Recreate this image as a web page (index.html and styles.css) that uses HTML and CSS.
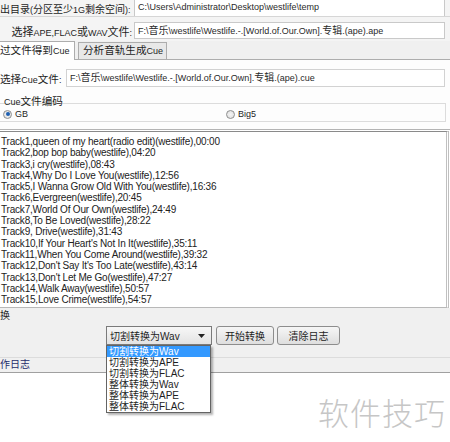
FILE: index.html
```html
<!DOCTYPE html>
<html>
<head>
<meta charset="utf-8">
<link rel="stylesheet" href="styles.css">
</head>
<body>
<div class="win">
  <div class="row r1">
    <span class="lbl l1"><i class="f">出目录</i>(<i class="f">分区至少</i>1G<i class="f">剩余空间</i>):</span>
    <div class="field f1">C:\Users\Administrator\Desktop\westlife\temp</div>
  </div>
  <div class="row r2">
    <span class="lbl l2"><i class="c2">选择</i>APE,FLAC<i class="c2">或</i>WAV<i class="c2">文件</i>:</span>
    <div class="field f2">F:\<i class="f">音乐</i>\westlife\Westlife.-.[World.of.Our.Own].<i class="f">专辑</i>.(ape).ape</div>
  </div>
  <div class="tabs">
    <div class="tab active"><i class="c">过文件得到</i>Cue</div>
    <div class="tab"><i class="c">分析音轨生成</i>Cue</div>
  </div>
  <div class="page">
    <div class="row r3">
      <span class="lbl l3"><i class="c">选择</i>Cue<i class="c">文件</i>:</span>
      <div class="field f3">F:\<i class="f">音乐</i>\westlife\Westlife.-.[World.of.Our.Own].<i class="f">专辑</i>.(ape).cue</div>
    </div>
    <div class="group">
      <div class="glabel">Cue<i class="c">文件编码</i></div>
      <div class="gbox">
        <label class="radio"><span class="dot on"></span>GB</label>
        <label class="radio big5"><span class="dot"></span>Big5</label>
      </div>
    </div>
  </div>
  <div class="log">
    <div>Track1,queen of my heart(radio edit)(westlife),00:00</div>
    <div>Track2,bop bop baby(westlife),04:20</div>
    <div>Track3,i cry(westlife),08:43</div>
    <div>Track4,Why Do I Love You(westlife),12:56</div>
    <div>Track5,I Wanna Grow Old With You(westlife),16:36</div>
    <div>Track6,Evergreen(westlife),20:45</div>
    <div>Track7,World Of Our Own(westlife),24:49</div>
    <div>Track8,To Be Loved(westlife),28:22</div>
    <div>Track9, Drive(westlife),31:43</div>
    <div>Track10,If Your Heart's Not In It(westlife),35:11</div>
    <div>Track11,When You Come Around(westlife),39:32</div>
    <div>Track12,Don't Say It's Too Late(westlife),43:14</div>
    <div>Track13,Don't Let Me Go(westlife),47:27</div>
    <div>Track14,Walk Away(westlife),50:57</div>
    <div>Track15,Love Crime(westlife),54:57</div>
  </div>
  <div class="convert">
    <div class="clabel">换</div>
    <div class="controls">
      <div class="select">
        <span>切割转换为Wav</span>
        <svg class="arrow" width="7" height="4" viewBox="0 0 7 4"><path d="M0 0H7L3.5 4Z" fill="#222"/></svg>
      </div>
      <div class="btn b1">开始转换</div>
      <div class="btn b2">清除日志</div>
    </div>
  </div>
  <div class="oplog"><span>作日志</span></div>
  <div class="bottom"></div>

  <ul class="droplist">
    <li class="sel">切割转换为Wav</li>
    <li>切割转换为APE</li>
    <li>切割转换为FLAC</li>
    <li>整体转换为Wav</li>
    <li>整体转换为APE</li>
    <li>整体转换为FLAC</li>
  </ul>
  <div class="watermark">软件技巧</div>
</div>
</body>
</html>
```
FILE: styles.css
```css
* { box-sizing: border-box; }
html, body { margin: 0; padding: 0; background: #fff; }
body {
  font-family: "Liberation Sans", "Noto Sans CJK SC", sans-serif;
  font-size: 9px;
  color: #1e1e1e;
}
i { font-style: normal; }
.c { font-size: 10.6px; }
.c2 { font-size: 11px; }
.f { font-size: 10px; }
.win {
  position: relative;
  width: 450px;
  height: 442px;
  overflow: hidden;
  background: #fff;
}
.row { display: flex; align-items: center; }
.lbl { white-space: nowrap; flex: none; overflow: visible; }
.field {
  flex: 1;
  min-width: 0;
  background: #fff;
  border: 1px solid #c9c9c9;
  height: 17px;
  line-height: 15px;
  padding-left: 3px;
  white-space: nowrap;
  overflow: hidden;
  color: #2a2a2a;
}
.r1 {
  height: 17px;
  background: #f4f4f4;
  border-bottom: 1px solid #d6d6d6;
}
.l1 { width: 134px; }
.f1 { border-top: none; border-bottom: none; margin-right: 5px; height: 16px; }
.r2 {
  height: 24px;
  background: #f4f4f4;
  padding-top: 3px;
}
.l2 { width: 134px; text-align: right; padding-right: 2px; }
.f2 { margin-right: 5px; }
.tabs {
  display: flex;
  height: 19px;
  background: #f0f0f0;
  border-bottom: 1px solid #adadad;
  align-items: flex-end;
  gap: 3px;
}
.tab {
  height: 17px;
  line-height: 15px;
  padding: 0 3px 0 4px;
  border: 1px solid #adadad;
  border-bottom: none;
  background: #e8e8e8;
  white-space: nowrap;
}
.tab.active {
  height: 19px;
  line-height: 17px;
  background: #fff;
  border-left: none;
  padding-left: 0;
  margin-bottom: -1px;
  width: 75px;
}
.page {
  background: #fdfdfd;
  padding: 9px 3px 0 0;
  height: 70px;
  border-bottom: 1px solid #b4b4b4;
}
.r3 { height: 18px; }
.l3 { width: 66px; }
.f3 { margin-right: 2px; height: 18px; border-color: #d2d2d2; }
.group { margin-top: 8px; }
.glabel { padding-left: 4px; line-height: 12px; height: 12px; }
.gbox {
  display: flex;
  height: 19px;
  margin-top: -4px;
  margin-right: 1px;
  border: 1px solid #dcdcdc;
  border-left: none;
  align-items: center;
  padding-top: 3px;
}
.radio { display: flex; align-items: center; gap: 3px; padding-left: 3px; }
.big5 { margin-left: 195px; }
.dot {
  width: 9px; height: 9px; border-radius: 50%;
  border: 1px solid #8e8f8f;
  background: radial-gradient(circle, #f4f4f4 0, #dcdcdc 100%);
  position: relative;
}
.dot.on::after {
  content: ""; position: absolute; left: 1.5px; top: 1.5px;
  width: 4px; height: 4px; border-radius: 50%;
  background: #1e5fb0;
}
.log {
  margin-top: 1px;
  border-top: 1px solid #8a8a8a;
  border-right: 3px double #c0c0c0;
  height: 177px;
  padding-top: 4px;
  line-height: 11.3px;
  font-size: 10px;
  letter-spacing: -0.2px;
  background: #fff;
  border-bottom: 1px solid #b8b8b8;
  margin-right: 1px;
  color: #222;
}
.log div { white-space: nowrap; padding-left: 1px; }
.convert {
  background: #f0f0f0;
  height: 49px;
  font-size: 10px;
}
.clabel { line-height: 14px; padding-top: 1px; }
.controls { display: flex; gap: 3px; padding-left: 106px; margin-top: 3px; }
.select {
  width: 106px;
  height: 19px;
  margin-right: 1px;
  border: 1px solid #7a7a7a;
  background: linear-gradient(#f7f7f7, #e3e3e3);
  display: flex;
  align-items: center;
  justify-content: space-between;
  padding: 0 6px 0 3px;
}
.btn {
  height: 19px;
  border: 1px solid #8d8d8d;
  border-radius: 3px;
  background: linear-gradient(#f6f6f6, #dedede);
  display: flex;
  align-items: center;
  justify-content: center;
}
.b1 { width: 58px; }
.b2 { width: 63px; }
.oplog {
  height: 16px;
  background: #f0f0f0;
  border-top: 1px solid #dcdcdc;
  border-bottom: 1px solid #a0a0a0;
  color: #1f2d6b;
  line-height: 14px;
  font-size: 10px;
}
.bottom { height: 69px; background: #fff; }
.droplist {
  position: absolute;
  left: 106px;
  top: 345px;
  width: 105px;
  margin: 0;
  padding: 0;
  list-style: none;
  background: #fff;
  border: 1px solid #646464;
  box-shadow: 2px 2px 2px rgba(0,0,0,0.3);
  font-size: 10px;
}
.droplist li { height: 11px; line-height: 11px; padding-left: 2px; white-space: nowrap; }
.droplist li.sel { background: #3399ff; color: #fff; }
.watermark {
  position: absolute;
  left: 318px;
  top: 389px;
  font-family: "Noto Sans CJK SC", sans-serif;
  font-size: 31px;
  font-weight: 300;
  color: #c6c6c6;
  letter-spacing: 1px;
}
```
